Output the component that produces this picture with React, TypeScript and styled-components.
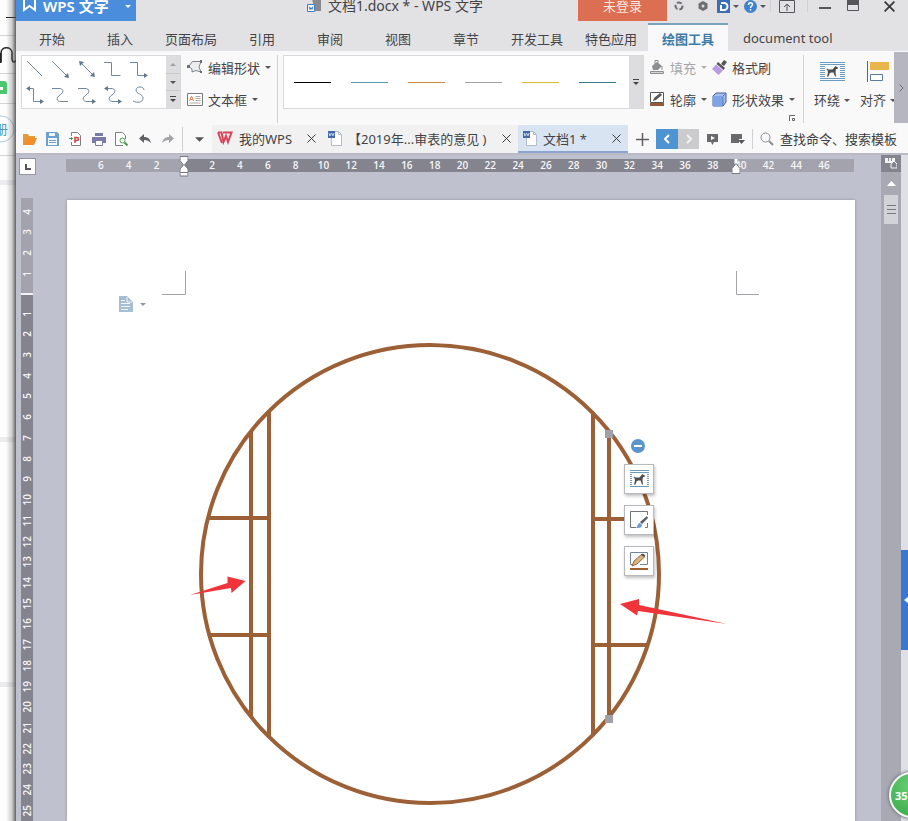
import React from "react";
import styled, { createGlobalStyle, css } from "styled-components";

const GlobalStyle = createGlobalStyle`
  * { box-sizing: border-box; }
  html, body, #root { height: 100%; }
  body {
    margin: 0;
    overflow: hidden;
    font-family: "Noto Sans", "Noto Sans CJK SC", sans-serif;
    font-size: 13px;
    color: #444446;
  }
  button, input {
    font: inherit;
    color: inherit;
    border: 0;
    padding: 0;
    margin: 0;
    background: none;
  }
  button { white-space: nowrap; cursor: pointer; }
  svg { display: block; flex: none; }
`;

/* ---------- frame ---------- */

const Screen = styled.div`
  display: flex;
  height: 100vh;
  overflow: hidden;
  position: relative;
`;

const Backdrop = styled.aside`
  flex: none;
  width: 16px;
  overflow: hidden;
  position: relative;
  background: #fdfdfd;
  &::after {
    content: "";
    position: absolute;
    inset: 0 0 0 6px;
    background: linear-gradient(to right, rgba(90, 90, 90, 0), rgba(90, 90, 90, 0.3) 60%, rgba(70, 70, 70, 0.85));
  }
`;

const AppWindow = styled.div`
  flex: 1;
  min-width: 0;
  display: flex;
  flex-direction: column;
`;

/* ---------- title bar ---------- */

const TitleBar = styled.header`
  display: flex;
  align-items: flex-start;
  height: 23px;
  background: #e2e2e5;
`;

const Brand = styled.button`
  display: flex;
  align-items: center;
  gap: 6px;
  width: 120px;
  height: 21px;
  padding: 0 5px 9px 6px;
  background: #4a8ddc;
  color: #fff;
  font-size: 15px;
  font-weight: 600;
  line-height: 12px;
  svg:last-child { margin-left: auto; }
`;

const DocTitle = styled.div`
  flex: 1;
  display: flex;
  align-items: center;
  gap: 6px;
  height: 12px;
  padding-left: 171px;
  line-height: 12px;
  font-size: 14px;
  white-space: nowrap;
`;

const Login = styled.button`
  width: 89px;
  height: 21px;
  padding-bottom: 9px;
  line-height: 12px;
  background: #dc6f51;
  color: #fbe9e3;
`;

const WindowTool = styled.button<{ $w: number }>`
  display: flex;
  align-items: center;
  justify-content: center;
  gap: 3px;
  width: ${(p) => p.$w}px;
  height: 12px;
`;

const Divider = styled.span<{ $h?: number; $m?: number }>`
  flex: none;
  width: 1px;
  height: ${(p) => (p.$h ? `${p.$h}px` : "100%")};
  margin: 0 ${(p) => p.$m ?? 0}px;
  background: #d0d0d4;
`;

/* ---------- ribbon tabs ---------- */

const Tabs = styled.nav`
  display: flex;
  height: 28px;
  padding-left: 2px;
  background: #e2e2e5;
`;

const Tab = styled.button<{ $w?: number; $active?: boolean }>`
  width: ${(p) => (p.$w ? `${p.$w}px` : "auto")};
  padding: ${(p) => (p.$w ? "0" : "0 15px")};
  border-top: 2px solid transparent;
  ${(p) =>
    p.$active &&
    css`
      background: #f9f9fb;
      border-top-color: #79a3bd;
      color: #3f7ba6;
      font-weight: 700;
    `}
`;

/* ---------- ribbon ---------- */

const Ribbon = styled.section`
  display: flex;
  height: 74px;
  padding: 4px 0 2px 5px;
  background: #f9f9fa;
  position: relative;
`;

const Gallery = styled.div<{ $w: number }>`
  display: flex;
  flex: none;
  width: ${(p) => p.$w}px;
  height: 54px;
  border: 1px solid #d9d9dc;
  background: #fff;
`;

const ShapeGrid = styled.div`
  flex: 1;
  display: grid;
  grid-template-columns: repeat(5, 26px);
  grid-template-rows: repeat(2, 26px);
`;

const ShapeButton = styled.button`
  display: flex;
  align-items: center;
  justify-content: center;
`;

const GalleryScroll = styled.div`
  width: 14px;
  display: flex;
  flex-direction: column;
  background: #dddde0;
  button {
    flex: 1;
    display: flex;
    align-items: center;
    justify-content: center;
  }
  button + button { border-top: 1px solid #c9c9cc; }
`;

const LineGrid = styled.div`
  flex: 1;
  display: flex;
  align-items: center;
  gap: 20px;
  padding-left: 10px;
`;

const LineSwatch = styled.button<{ $c: string }>`
  width: 37px;
  height: 30px;
  background: linear-gradient(${(p) => p.$c}, ${(p) => p.$c}) center / 100% 1px no-repeat;
`;

const CommandColumn = styled.div<{ $w: number; $ml: number }>`
  flex: none;
  display: flex;
  flex-direction: column;
  gap: 8px;
  width: ${(p) => p.$w}px;
  margin-left: ${(p) => p.$ml}px;
`;

const Command = styled.button<{ $disabled?: boolean }>`
  display: flex;
  align-items: center;
  gap: 5px;
  height: 24px;
  color: ${(p) => (p.$disabled ? "#a5a5a8" : "inherit")};
`;

const TallCommand = styled.button<{ $w: number }>`
  flex: none;
  display: flex;
  flex-direction: column;
  align-items: center;
  gap: 8px;
  width: ${(p) => p.$w}px;
  padding-top: 6px;
  span { display: flex; align-items: center; gap: 4px; line-height: 20px; }
`;

const Launcher = styled.button`
  position: absolute;
  left: 773px;
  bottom: 3px;
`;

const RibbonMore = styled.button`
  position: absolute;
  right: 0;
  top: 1px;
  bottom: 2px;
  width: 14px;
  background: #b5b6c0;
  display: flex;
  align-items: center;
  justify-content: center;
`;

/* ---------- quick bar ---------- */

const QuickBar = styled.section`
  display: flex;
  align-items: center;
  height: 28px;
  padding-left: 2px;
  background: #f9f9fa;
`;

const QuickButton = styled.button<{ $w?: number; $h?: number; $bg?: string }>`
  flex: none;
  display: flex;
  align-items: center;
  justify-content: center;
  width: ${(p) => p.$w ?? 23}px;
  height: ${(p) => p.$h ?? 24}px;
  background: ${(p) => p.$bg ?? "none"};
`;

const DocTab = styled.div<{ $w: number; $active?: boolean }>`
  flex: none;
  display: flex;
  align-items: center;
  width: ${(p) => p.$w}px;
  height: 28px;
  padding: 0 7px 0 5px;
  background: ${(p) => (p.$active ? "#d9e4f3" : "#f1f1f2")};
  border-bottom: 2px solid ${(p) => (p.$active ? "#8ca5d0" : "#f1f1f2")};
`;

const DocTabLabel = styled.button`
  flex: 1;
  display: flex;
  align-items: center;
  gap: 6px;
`;

const SearchBox = styled.label`
  flex: 1;
  display: flex;
  align-items: center;
  gap: 6px;
  padding-left: 6px;
  input {
    flex: 1;
    min-width: 0;
    outline: 0;
  }
  input::placeholder { color: #3c3c3e; opacity: 1; }
`;

/* ---------- work area ---------- */

const WorkArea = styled.main`
  flex: 1;
  min-height: 0;
  display: grid;
  grid-template-columns: 50px 1fr 26px 20px 7px;
  grid-template-rows: 45px 1fr;
  background: #bfc1ce;
  border-top: 2px solid #b9bac5;
`;

const RulerCorner = styled.div`
  padding: 4px 0 0 4px;
`;

const TabStop = styled.button`
  display: flex;
  align-items: center;
  justify-content: center;
  width: 15px;
  height: 15px;
  background: #fff;
  outline: 1px solid #94959f;
`;

const HRuler = styled.div`
  position: relative;
  height: 13px;
  margin: 4px 1px 0 0;
  padding: 0 16px 0 21px;
  display: grid;
  grid-template-columns: repeat(27, 1fr);
  justify-items: center;
  background: linear-gradient(to right, #a2a3ac 15%, #84848e 15%, #84848e 85%, #a2a3ac 85%);
  color: #f6f6f8;
  font: 600 10px/13px "Open Sans", sans-serif;
`;

const Marker = styled.span<{ $at: number; $top: number }>`
  position: absolute;
  left: ${(p) => p.$at}%;
  top: ${(p) => p.$top}px;
  transform: translateX(-50%);
`;

const VRuler = styled.div`
  grid-column: 1;
  grid-row: 2;
  width: 12px;
  margin-left: 5px;
  margin-top: -2px;
  color: #f6f6f8;
  font: 600 10px/12px "Open Sans", sans-serif;
  background: #84848e;
`;

const VNumbers = styled.div<{ $n: number; $h: number; $margin?: boolean }>`
  display: grid;
  grid-template-rows: repeat(${(p) => p.$n}, 1fr);
  height: ${(p) => p.$h}px;
  align-items: center;
  justify-items: center;
  box-sizing: content-box;
  ${(p) =>
    p.$margin
      ? css`
          padding: 3px 0 9px;
          background: #a2a3ac;
          border-bottom: 2px solid #f4f4f6;
        `
      : css`
          padding-top: 8px;
        `}
  span {
    writing-mode: vertical-rl;
    transform: rotate(180deg);
    line-height: 12px;
  }
`;

const Page = styled.article`
  grid-column: 2;
  grid-row: 2;
  position: relative;
  min-width: 0;
  margin-left: 1px;
  background: #fff;
  box-shadow: 0 0 3px #8f909b;
`;

const FloatTools = styled.div`
  position: absolute;
  left: 557px;
  top: 239px;
  display: flex;
  flex-direction: column;
  align-items: center;
  gap: 11px;
`;

const FloatButton = styled.button`
  display: flex;
  align-items: center;
  justify-content: center;
  width: 30px;
  height: 30px;
  background: #fff;
  border: 1px solid #b9b9bd;
  box-shadow: 1px 2px 3px rgba(0, 0, 0, 0.25);
`;

const Collapse = styled.button`
  margin: 0 2px 0 0;
`;

const ParaMark = styled.button`
  position: absolute;
  left: 52px;
  top: 96px;
  display: flex;
  align-items: center;
  gap: 7px;
`;

const ScrollColumn = styled.div`
  grid-column: 4;
  grid-row: 1 / 3;
  display: flex;
  flex-direction: column;
  align-items: center;
  background: #a9a9b4;
`;

const ScrollTop = styled.button`
  width: 100%;
  height: 17px;
  display: flex;
  align-items: center;
  justify-content: center;
  background: #84848e;
`;

const ScrollUp = styled.button`
  width: 100%;
  height: 23px;
  display: flex;
  align-items: center;
  justify-content: center;
`;

const ScrollThumb = styled.button`
  width: 14px;
  height: 29px;
  display: flex;
  align-items: center;
  justify-content: center;
  background: #d2d2d8;
`;

const Edge = styled.div`
  grid-column: 5;
  grid-row: 1 / 3;
  background: #dfdfe6;
`;

const SideHandle = styled.button`
  position: absolute;
  right: 0;
  top: 550px;
  width: 7px;
  height: 100px;
  background: #3a77d2;
  display: flex;
  align-items: center;
  justify-content: flex-end;
`;

const Speed = styled.button`
  position: absolute;
  right: -27px;
  top: 772px;
  width: 46px;
  height: 46px;
  padding-left: 4px;
  text-align: left;
  border-radius: 50%;
  border: 2px solid #eef4ee;
  background: radial-gradient(circle at 50% 30%, #6ccf78, #35a846);
  box-shadow: 0 0 3px 1px #77777f;
  color: #fff;
  font-weight: 700;
  font-size: 11px;
`;

/* ---------- icons ---------- */

const Caret = ({ c = "#555", w = 6 }: { c?: string; w?: number }) => (
  <svg width={w} height={Math.ceil(w / 2)} viewBox="0 0 6 3" aria-hidden="true">
    <path d="M0 0h6L3 3z" fill={c} />
  </svg>
);

const Cross = ({ s = 9, w = 1 }: { s?: number; w?: number }) => (
  <svg width={s} height={s} viewBox="0 0 9 9" aria-hidden="true">
    <path d="M.5.5l8 8M8.5.5l-8 8" stroke="#3a3a3c" strokeWidth={w} />
  </svg>
);

const shapes: { name: string; d: string; heads?: string }[] = [
  { name: "直线", d: "M2 2l15 15" },
  { name: "箭头", d: "M1 2l15 15", heads: "M18 19l-5-1 4-4z" },
  { name: "双箭头", d: "M4 4l12 12", heads: "M18 18l-5-1 4-4zM2 2l5 1-4 4z" },
  { name: "肘形连接符", d: "M1 3.500h7.500v13h9" },
  { name: "肘形箭头", d: "M1 3.500h7.500v13h7", heads: "M19 16.500l-4-2.500v5z" },
  { name: "肘形双箭头", d: "M4 3.500h4.500v13h7", heads: "M19 16.500l-4-2.500v5zM1 3.500l4-2.500v5z" },
  { name: "曲线连接符", d: "M1 3.500h7c5 0 5 4 1 6.500s-4 6.500 1 6.500h7" },
  { name: "曲线箭头", d: "M1 3.500h7c5 0 5 4 1 6.500s-4 6.500 1 6.500h5", heads: "M19 16.500l-4-2.500v5z" },
  { name: "曲线双箭头", d: "M4 3.500h4c5 0 5 4 1 6.500s-4 6.500 1 6.500h5", heads: "M19 16.500l-4-2.500v5zM1 3.500l4-2.500v5z" },
  { name: "曲线", d: "M15 5c0-4-8-4-8 0s7 4 7 8c0 5-6 5-10 3" },
];

const ShapeIcon = ({ d, heads }: { d: string; heads?: string }) => (
  <svg width="20" height="20" viewBox="0 0 20 20" aria-hidden="true">
    <path d={d} fill="none" stroke="#70889c" />
    {heads && <path d={heads} fill="#5f788d" />}
  </svg>
);

const Dog = () => (
  <path d="M7 15.500l1-4-.5-2.500-1-.5.5-1 1.500 1h4l2.500-3 1-.5.5 1 1.500.5-.5 1.500h-1.500l-.5 3 .5 4.500h-1l-1.500-4h-2.500l-1.500 1-1 3z" fill="#4c4d51" />
);

const WrapIcon = ({ small }: { small?: boolean }) => (
  <svg width={small ? 19 : 25} height={small ? 18 : 21} viewBox={small ? "3 1 19 18" : "0 0 25 21"} aria-hidden="true">
    <path d="M0 1.500h25M0 3.500h25M0 5.500h5M20 5.500h5M0 7.500h5M20 7.500h5M0 9.500h5M20 9.500h5M0 11.500h5M20 11.500h5M0 13.500h5M20 13.500h5M0 15.500h5M20 15.500h5M0 17.500h25M0 19.500h25" stroke="#6b9cc4" />
    <Dog />
  </svg>
);

const AlignIcon = () => (
  <svg width="23" height="21" viewBox="0 0 23 21" aria-hidden="true">
    <path d="M.5 0v21" stroke="#5a6670" />
    <path d="M3 1h19v8H3z" fill="#e9b64c" />
    <path d="M3.500 13.500h12v6h-12z" fill="#fff" stroke="#5b7ba0" />
  </svg>
);

const EditShapeIcon = () => (
  <svg width="16" height="14" viewBox="0 0 16 14" aria-hidden="true">
    <path d="M1.500 6.500l4-5h8.500l-2 5.500 2 5-5-1.500-4 1.500v-3z" fill="#eceef0" stroke="#7a838b" />
    <path d="M13 0h2v3h-2zM13 11h2v2h-2zM0 5h3v3H0z" fill="#667079" />
  </svg>
);

const TextBoxIcon = () => (
  <svg width="16" height="13" viewBox="0 0 16 13" aria-hidden="true">
    <path d="M.5.5h15v12H.5z" fill="#fff" stroke="#777b80" />
    <path d="M2.500 8l2-5 2 5M3 6.500h3" stroke="#e08a55" fill="none" />
    <path d="M8.500 3.500h5M8.500 5.500h5M8.500 7.500h5M2.500 10h11" stroke="#b0a9a2" />
  </svg>
);

const FillIcon = () => (
  <svg width="16" height="16" viewBox="0 0 16 16" aria-hidden="true">
    <path d="M3 7l5-4 5 4-4 4H4z" fill="#8e8e92" />
    <path d="M6 5V1.500h3V4M13 7v4" stroke="#8e8e92" fill="none" />
    <path d="M1.500 12.500h13v2h-13z" fill="#d6d6d8" stroke="#8e8e92" />
  </svg>
);

const OutlineIcon = () => (
  <svg width="16" height="16" viewBox="0 0 16 16" aria-hidden="true">
    <path d="M1.500 1.500h13v10h-13z" fill="#fff" stroke="#55585c" />
    <path d="M4 10l1-3 6-5 2 2-6 5z" fill="#55585c" />
    <path d="M1 12h14v3H1z" fill="#96593a" />
  </svg>
);

const BrushIcon = () => (
  <svg width="15" height="15" viewBox="0 0 15 15" aria-hidden="true">
    <path d="M9 4l3-4 3 2-3 4z" fill="#55565a" />
    <path d="M6 2l7 6-1.500 2-7-6z" fill="#55525a" />
    <path d="M4 4.500l7 6L6.500 15 0 9z" fill="#b79be0" />
  </svg>
);

const CubeIcon = () => (
  <svg width="15" height="15" viewBox="0 0 15 15" aria-hidden="true">
    <path d="M1 4l3-3h10v9l-3 4H1z" fill="#a5c0f0" stroke="#44609c" />
    <path d="M1 4h10v10H1z" fill="#7ea2e6" />
    <path d="M11 4.500V14M11 4l3-3" fill="none" stroke="#5a78b8" />
  </svg>
);

const WordIcon = () => (
  <svg width="14" height="17" viewBox="0 0 14 17" aria-hidden="true">
    <path d="M3.500 1.500h7l3 3v11h-10z" fill="#fff" stroke="#b4bccb" />
    <path d="M10.500 1.500v3h3" fill="none" stroke="#b4bccb" />
    <path d="M0 1h7v7H0z" fill="#4468ad" />
    <path d="M1 3l1 3 1.500-3L5 6l1-3" fill="none" stroke="#c9d6ee" />
  </svg>
);

const WpsIcon = () => (
  <svg width="16" height="14" viewBox="0 0 16 14" aria-hidden="true">
    <path d="M1 1.500h3.500L6.500 11 9 5l2 6 3.500-9.500H6" fill="none" stroke="#d8455a" strokeWidth="2" />
    <path d="M1 1.500L5 12" stroke="#d8455a" strokeWidth="2" />
  </svg>
);

/* ---------- data ---------- */

const ribbonTabs: [string, number?][] = [
  ["开始", 68], ["插入", 68], ["页面布局", 74], ["引用", 68], ["审阅", 68], ["视图", 68],
  ["章节", 68], ["开发工具", 74], ["特色应用", 74], ["绘图工具", 80], ["document tool"],
];

const lineColors = ["#000000", "#5b9bb0", "#cf8c3c", "#a0a0a0", "#d6bf30", "#3f7a8c"];

const hNumbers = [6, 4, 2, "", ...Array.from({ length: 23 }, (_, i) => (i + 1) * 2)];

/* ---------- parts ---------- */

const ScrollButtons = ({ compact }: { compact?: boolean }) => (
  <GalleryScroll>
    {!compact && (
      <>
        <button aria-label="上一行"><svg width="6" height="3" viewBox="0 0 6 3"><path d="M0 3h6L3 0z" fill="#a0a0a3" /></svg></button>
        <button aria-label="下一行"><Caret /></button>
      </>
    )}
    <button aria-label="更多">
      <svg width="6" height="7" viewBox="0 0 6 7"><path d="M0 .5h6" stroke="#444" /><path d="M0 3h6L3 6z" fill="#444" /></svg>
    </button>
  </GalleryScroll>
);

const Drawing = () => (
  <svg width="788" height="621" viewBox="67 200 788 621" role="img" aria-label="圆形窗格图形">
    <path d="M162 294.500h23.500V271M759 294.500h-22.500V271" fill="none" stroke="#a4a4a8" />
    <g fill="none" stroke="#9c6036" strokeWidth="4">
      <circle cx="430" cy="574" r="229" />
      <path d="M251 431v286M269 411v327M208 518h63M209 635h62" />
      <path d="M593 412v324M609 434v285M593 519h60M593 645h55" />
    </g>
    <path d="M190 595l37.500-12v-6.500l18 4.500-14 12-.5-5z" fill="#f0343a" />
    <path d="M620 604l19-5v6l88 19-89-13-1 4.500z" fill="#f0343a" />
    <path d="M605 430h8v8h-8zM605 715h8v8h-8z" fill="#a0a0a6" />
  </svg>
);

export default function App() {
  return (
    <Screen>
      <GlobalStyle />
      <Backdrop>
        <svg width="16" height="821" viewBox="0 0 16 821" aria-hidden="true">
          <path d="M0 35.500h16M0 73.500h16M0 103.500h16M0 155.500h16" stroke="#d5d5d5" />
          <path d="M0 180h16v5H0zM0 437h16v5H0zM0 682h16v5H0z" fill="#ececef" />
          <path d="M6 17.500h10" stroke="#222" />
          <path d="M1 62v-9c0-7 11-7 11 0v5c0 5 3 5 4 2" fill="none" stroke="#222" strokeWidth="1.500" />
          <path d="M0 53v10" stroke="#222" strokeWidth="3" />
          <path d="M0 81h4q3 0 3 3v10H0z" fill="#4cc76f" />
          <path d="M0 87h3v3H0z" fill="#fff" />
          <circle cx="1" cy="129" r="13" fill="#fff" stroke="#a9cde0" />
          <text x="-5" y="134" fontSize="13" fill="#4a9cc0">册</text>
        </svg>
      </Backdrop>

      <AppWindow>
        <TitleBar>
          <Brand>
            <svg width="15" height="14" viewBox="0 0 15 14" aria-hidden="true">
              <path d="M2 0v11l5.500-4 5.500 4V0" fill="none" stroke="#fff" strokeWidth="2" />
            </svg>
            WPS 文字
            <Caret c="#fff" />
          </Brand>
          <DocTitle>
            <svg width="15" height="14" viewBox="0 0 15 14" aria-hidden="true">
              <path d="M5 0h9v12H8z" fill="#8a8a8e" />
              <path d="M.5 5.500h7v7h-7z" fill="#fff" stroke="#3f7cc0" />
              <path d="M2 7.500l1 3 1-2 1 2 1-3" fill="none" stroke="#3f7cc0" />
            </svg>
            文档1.docx * - WPS 文字
          </DocTitle>
          <Login>未登录</Login>
          <WindowTool $w={24} aria-label="同步">
            <svg width="10" height="10" viewBox="0 0 10 10"><circle cx="5" cy="5" r="3.500" fill="none" stroke="#6e6e72" strokeWidth="2" strokeDasharray="5 2" /></svg>
          </WindowTool>
          <WindowTool $w={24} aria-label="设置">
            <svg width="10" height="10" viewBox="0 0 10 10"><path d="M5 0l4.500 2.500v5L5 10 .5 7.500v-5z" fill="#6e6e72" /><circle cx="5" cy="5" r="1.500" fill="#ddd" /></svg>
          </WindowTool>
          <WindowTool $w={26} aria-label="文档助手">
            <svg width="13" height="13" viewBox="0 0 13 13"><path d="M0 0h13v13H0z" fill="#3a6fb8" /><path d="M4 3h3a3.500 3.500 0 010 7H4V5" fill="none" stroke="#fff" strokeWidth="2" /></svg>
            <Caret />
          </WindowTool>
          <WindowTool $w={27} aria-label="帮助">
            <svg width="13" height="13" viewBox="0 0 13 13"><circle cx="6.500" cy="6.500" r="6.500" fill="#3e82cc" /><path d="M4.500 5c0-3 4-3 4-.5 0 1.500-2 1.500-2 3.500M6.500 9v1.500" fill="none" stroke="#fff" strokeWidth="1.500" /></svg>
            <Caret />
          </WindowTool>
          <Divider $h={12} $m={2} />
          <WindowTool $w={28} aria-label="功能区显示">
            <svg width="16" height="13" viewBox="0 0 16 13"><path d="M.5.5h15v12H.5zM8 11V4M5 7l3-3 3 3" fill="none" stroke="#55555a" /></svg>
          </WindowTool>
          <Divider $h={12} $m={6} />
          <WindowTool $w={22} aria-label="最小化">
            <svg width="12" height="12" viewBox="0 0 12 12"><path d="M0 8h12" stroke="#55555a" strokeWidth="2" /></svg>
          </WindowTool>
          <WindowTool $w={34} aria-label="最大化">
            <svg width="12" height="12" viewBox="0 0 12 12"><path d="M.5 1.500h11v9H.5z" fill="none" stroke="#55555a" /><path d="M0 0h12v5H0z" fill="#55555a" /></svg>
          </WindowTool>
          <WindowTool $w={38} aria-label="关闭"><Cross s={11} w={1.5} /></WindowTool>
        </TitleBar>

        <Tabs>
          {ribbonTabs.map(([label, w]) => (
            <Tab key={label} $w={w} $active={label === "绘图工具"}>{label}</Tab>
          ))}
        </Tabs>

        <Ribbon>
          <Gallery $w={160}>
            <ShapeGrid>
              {shapes.map((s) => (
                <ShapeButton key={s.name} aria-label={s.name}><ShapeIcon d={s.d} heads={s.heads} /></ShapeButton>
              ))}
            </ShapeGrid>
            <ScrollButtons />
          </Gallery>
          <CommandColumn $w={90} $ml={6}>
            <Command><EditShapeIcon />编辑形状<Caret /></Command>
            <Command><TextBoxIcon />文本框<Caret /></Command>
          </CommandColumn>
          <Divider />
          <CommandColumn $w={361} $ml={5}>
            <Gallery $w={361}>
              <LineGrid>
                {lineColors.map((c, i) => <LineSwatch key={c} $c={c} aria-label={`线条样式 ${i + 1}`} />)}
              </LineGrid>
              <ScrollButtons compact />
            </Gallery>
          </CommandColumn>
          <CommandColumn $w={63} $ml={5}>
            <Command $disabled><FillIcon />填充<Caret c="#b0b0b3" /></Command>
            <Command><OutlineIcon />轮廓<Caret /></Command>
          </CommandColumn>
          <CommandColumn $w={91} $ml={0}>
            <Command><BrushIcon />格式刷</Command>
            <Command><CubeIcon />形状效果<Caret /></Command>
          </CommandColumn>
          <Divider />
          <TallCommand $w={56}>
            <WrapIcon />
            <span>环绕<Caret /></span>
          </TallCommand>
          <TallCommand $w={36}>
            <AlignIcon />
            <span>对齐<Caret /></span>
          </TallCommand>
          <Launcher aria-label="更多设置">
            <svg width="7" height="7" viewBox="0 0 7 7"><path d="M.5 6V.5H6M3.500 3.500h2v2h-2z" fill="none" stroke="#666" /></svg>
          </Launcher>
          <RibbonMore aria-label="展开功能区">
            <svg width="5" height="8" viewBox="0 0 5 8"><path d="M.5.5L4 4 .5 7.500" fill="none" stroke="#6b6b75" /></svg>
          </RibbonMore>
        </Ribbon>

        <QuickBar>
          <QuickButton aria-label="打开">
            <svg width="15" height="13" viewBox="0 0 15 13"><path d="M1 12V1h5l1 2h6v3" fill="#e59a3c" /><path d="M1 12l2.500-7H15l-3 7z" fill="#ef8f2b" /></svg>
          </QuickButton>
          <QuickButton aria-label="保存">
            <svg width="13" height="14" viewBox="0 0 13 14"><path d="M0 0h11l2 2v12H0z" fill="#6ba0d0" /><path d="M3 1h6v3H3zM2 6h9v7H2z" fill="#f4f8fc" /><path d="M3 8.500h7M3 10.500h7" stroke="#6ba0d0" /></svg>
          </QuickButton>
          <QuickButton aria-label="输出为 PDF">
            <svg width="13" height="14" viewBox="0 0 13 14"><path d="M2.500 4V.5h6l3 3v10h-9V10" fill="#fff" stroke="#7d8085" /><path d="M6 11V5.500h2c2 0 2 3 0 3H6" fill="none" stroke="#c4453c" strokeWidth="1.500" /><path d="M0 6.500h4M2.500 5v3" stroke="#4f9a50" /></svg>
          </QuickButton>
          <QuickButton aria-label="打印">
            <svg width="14" height="13" viewBox="0 0 14 13"><path d="M3 0h8v3H3zM0 4h14v6H0z" fill="#7b7aa6" /><path d="M3.500 7.500h7v5h-7z" fill="#fff" stroke="#7b7aa6" /></svg>
          </QuickButton>
          <QuickButton aria-label="打印预览">
            <svg width="13" height="14" viewBox="0 0 13 14"><path d="M8 13.500H.5V.5h7l3 3V7" fill="#fff" stroke="#7d8085" /><circle cx="7.500" cy="8.500" r="2.500" fill="#fff" stroke="#4f9a50" /><path d="M9.500 10.500l3 3" stroke="#4f9a50" strokeWidth="2" /></svg>
          </QuickButton>
          <QuickButton aria-label="撤销">
            <svg width="12" height="10" viewBox="0 0 12 10"><path d="M0 4.500L5 0v3c4 0 6 2 7 6-2-2-4-3-7-3v3z" fill="#5f6065" /></svg>
          </QuickButton>
          <QuickButton aria-label="恢复">
            <svg width="12" height="10" viewBox="0 0 12 10"><path d="M12 4.500L7 0v3C3 3 1 5 0 9c2-2 4-3 7-3v3z" fill="#a3a4a8" /></svg>
          </QuickButton>
          <Divider $h={24} $m={3} />
          <QuickButton $w={26} aria-label="自定义快速访问工具栏"><Caret w={9} /></QuickButton>
          <DocTab $w={111}>
            <DocTabLabel><WpsIcon />我的WPS</DocTabLabel>
            <button aria-label="关闭 我的WPS"><Cross /></button>
          </DocTab>
          <DocTab $w={195}>
            <DocTabLabel><WordIcon />【2019年...审表的意见 )</DocTabLabel>
            <button aria-label="关闭文档"><Cross /></button>
          </DocTab>
          <DocTab $w={110} $active>
            <DocTabLabel><WordIcon />文档1 *</DocTabLabel>
            <button aria-label="关闭 文档1"><Cross /></button>
          </DocTab>
          <QuickButton $w={28} aria-label="新建">
            <svg width="13" height="13" viewBox="0 0 13 13"><path d="M6.500 0v13M0 6.500h13" stroke="#606064" strokeWidth="1.500" /></svg>
          </QuickButton>
          <QuickButton $w={22} $h={20} $bg="#4f94d2" aria-label="上一个">
            <svg width="6" height="10" viewBox="0 0 6 10"><path d="M5 1L1 5l4 4" fill="none" stroke="#fff" strokeWidth="2" /></svg>
          </QuickButton>
          <QuickButton $w={21} $h={20} $bg="#cbcbce" aria-label="下一个">
            <svg width="6" height="10" viewBox="0 0 6 10"><path d="M1 1l4 4-4 4" fill="none" stroke="#f2f2f2" strokeWidth="2" /></svg>
          </QuickButton>
          <QuickButton $w={26} aria-label="播放">
            <svg width="11" height="11" viewBox="0 0 11 11"><path d="M0 0h11v8H7l-1.500 3L4 8H0z" fill="#6a6a6e" /><path d="M4 2l4 2-4 2z" fill="#fff" /></svg>
          </QuickButton>
          <QuickButton $w={26} aria-label="切换窗口">
            <svg width="14" height="12" viewBox="0 0 14 12"><path d="M0 1h11v5H8v4H0z" fill="#6a6a6e" /><path d="M7 7h7l-3.500 4z" fill="#55555a" /></svg>
          </QuickButton>
          <Divider $h={20} $m={1} />
          <SearchBox>
            <svg width="14" height="14" viewBox="0 0 14 14" aria-hidden="true"><circle cx="5.500" cy="5.500" r="4.500" fill="none" stroke="#8c8c90" /><path d="M9 9l4 4" stroke="#8c8c90" strokeWidth="2" /></svg>
            <input type="text" aria-label="查找命令、搜索模板" placeholder="查找命令、搜索模板" />
          </SearchBox>
        </QuickBar>

        <WorkArea>
          <RulerCorner>
            <TabStop aria-label="制表位">
              <svg width="6" height="6" viewBox="0 0 6 6"><path d="M1 0v5h5" fill="none" stroke="#55555a" strokeWidth="2" /></svg>
            </TabStop>
          </RulerCorner>
          <HRuler>
            {hNumbers.map((n, i) => <span key={i}>{n}</span>)}
            <Marker $at={15} $top={-3}>
              <svg width="9" height="21" viewBox="0 0 9 21"><path d="M.5.5h8v4L5 9l3.500 4v7h-8v-7L4 9 .5 4.500zM.5 16.500h8" fill="#fff" stroke="#77777f" /></svg>
            </Marker>
            <Marker $at={85} $top={0}>
              <svg width="9" height="15" viewBox="0 0 9 15"><path d="M3 0h3v5H3z" fill="#fff" /><path d="M4.500 4.500l4 5v5h-8v-5z" fill="#fff" stroke="#77777f" /></svg>
            </Marker>
          </HRuler>
          <ScrollColumn>
            <ScrollTop aria-label="显示标尺">
              <svg width="12" height="11" viewBox="0 0 12 11"><path d="M0 0h10v5H0z" fill="#f2f2f4" /><path d="M3.500 0v3M6.500 0v3" stroke="#84848e" /><path d="M9 3l3 3v4H6V6z" fill="#84848e" stroke="#f2f2f4" /></svg>
            </ScrollTop>
            <ScrollUp aria-label="向上滚动">
              <svg width="9" height="5" viewBox="0 0 9 5"><path d="M0 5h9L4.500 0z" fill="#fff" /></svg>
            </ScrollUp>
            <ScrollThumb aria-label="滚动条">
              <svg width="9" height="9" viewBox="0 0 9 9"><path d="M0 .5h9M0 4.500h9M0 8.500h9" stroke="#77777f" /></svg>
            </ScrollThumb>
          </ScrollColumn>
          <Edge />
          <VRuler>
            <VNumbers $n={4} $h={83} $margin>
              {[4, 3, 2, 1].map((n) => <span key={n}>{n}</span>)}
            </VNumbers>
            <VNumbers $n={25} $h={518}>
              {Array.from({ length: 25 }, (_, i) => <span key={i}>{i + 1}</span>)}
            </VNumbers>
          </VRuler>
          <Page>
            <Drawing />
            <ParaMark aria-label="段落布局">
              <svg width="14" height="16" viewBox="0 0 14 16"><path d="M0 0h8l6 6v10H0z" fill="#a5bdd6" /><path d="M2 4.500h4M2 7.500h9M2 10.500h9M2 13.500h7M8 1v5h5" fill="none" stroke="#f4f8fc" /></svg>
              <Caret c="#8e99a6" />
            </ParaMark>
            <FloatTools>
              <Collapse aria-label="收起">
                <svg width="14" height="14" viewBox="0 0 14 14"><circle cx="7" cy="7" r="7" fill="#5b95cc" /><path d="M3 7h8" stroke="#fff" strokeWidth="2" /></svg>
              </Collapse>
              <FloatButton aria-label="环绕方式"><WrapIcon small /></FloatButton>
              <FloatButton aria-label="填充样式">
                <svg width="20" height="20" viewBox="0 0 20 20"><path d="M7 17.500H1.500V1.500h17V5M18.500 13v4.500H16" fill="none" stroke="#70757c" /><path d="M11 12l7-6 1 2-6 6z" fill="#5a5d62" /><path d="M7 18c2-1 1-5 4-5l2 2c0 3-3 3-6 3z" fill="#6f9bd4" /></svg>
              </FloatButton>
              <FloatButton aria-label="轮廓样式">
                <svg width="20" height="20" viewBox="0 0 20 20"><path d="M4 13.500H1.500v-12h17v12H11" fill="none" stroke="#70859a" /><path d="M3 15l2-5 8-7 3 2.500-8 7.500z" fill="#ddb47c" stroke="#85694a" /><path d="M12 4l2-1.500 2.500 2L15 6z" fill="#55565a" /><path d="M1 17h18v2H1z" fill="#a3602f" /></svg>
              </FloatButton>
            </FloatTools>
          </Page>
        </WorkArea>
      </AppWindow>

      <SideHandle aria-label="展开侧栏">
        <svg width="4" height="6" viewBox="0 0 4 6"><path d="M4 0v6L0 3z" fill="#fff" /></svg>
      </SideHandle>
      <Speed>35</Speed>
    </Screen>
  );
}
